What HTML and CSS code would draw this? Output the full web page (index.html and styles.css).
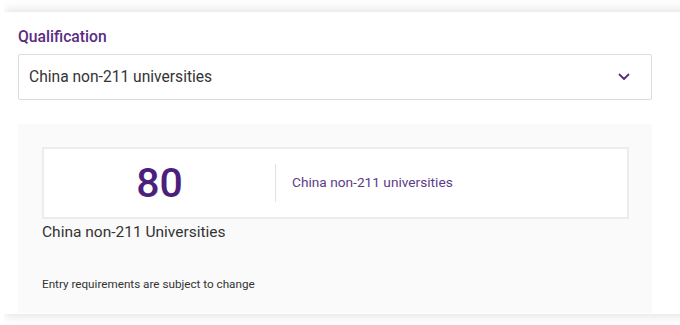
FILE: index.html
```html
<!DOCTYPE html>
<html lang="en">
<head>
    <meta charset="UTF-8">
    <meta name="viewport" content="width=device-width, initial-scale=1.0">
    <title>Entry requirements</title>
    <link rel="stylesheet" href="styles.css">
</head>
<body>
    <div class="card">
        <label class="field-label" for="qualification">Qualification</label>
        <div class="select">
            <span class="select-value" id="qualification">China non-211 universities</span>
            <svg class="chevron" viewBox="0 0 12 8" fill="none">
                <path d="M1.5 1.5l4.5 4.5 4.5-4.5" stroke="currentColor" stroke-width="1.8" stroke-linecap="round" stroke-linejoin="round"/>
            </svg>
        </div>

        <div class="panel">
            <div class="score-box">
                <div class="score">80</div>
                <div class="score-label">China non-211 universities</div>
            </div>
            <div class="score-title">China non-211 Universities</div>
            <p class="note">Entry requirements are subject to change</p>
        </div>
    </div>
</body>
</html>
```

FILE: styles.css
```css
* {
    margin: 0;
    padding: 0;
    box-sizing: border-box;
}

body {
    font-family: Roboto, 'Liberation Sans', sans-serif;
    background: #fff;
    color: #333;
    overflow: hidden;
    height: 325px;
}

.card {
    margin: 12px -20px 0 4px;
    height: 302px;
    padding: 16px 48px 0 14px;
    background: #fff;
    box-shadow: 0 -4px 9px rgba(0, 0, 0, 0.08), 0 4px 9px rgba(0, 0, 0, 0.08);
    clip-path: inset(-14px -40px -14px 0);
}

.field-label {
    display: block;
    font-size: 15.7px;
    font-weight: 500;
    line-height: 18px;
    color: #5a2d82;
    margin-bottom: 8px;
}

.select {
    display: flex;
    align-items: center;
    justify-content: space-between;
    width: 634px;
    height: 46px;
    padding: 0 21px 0 10px;
    border: 1px solid #dcdcdc;
    border-radius: 2px;
    background: #fff;
}

.select-value {
    font-size: 15.6px;
    color: #333;
}

.chevron {
    width: 12px;
    height: 8px;
    color: #5a2d82;
}

.panel {
    width: 634px;
    height: 189px;
    margin-top: 24px;
    padding: 23px 23px 0 24px;
    background: #fafafa;
}

.score-box {
    display: flex;
    align-items: center;
    height: 72px;
    background: #fff;
    border: 2px solid #ececec;
}

.score {
    width: 232px;
    text-align: center;
    font-size: 41px;
    font-weight: 500;
    color: #4b1f7e;
    border-right: 1px solid #e2e2e2;
    line-height: 38px;
}

.score-label {
    padding-left: 16px;
    margin-top: -3px;
    font-size: 13.7px;
    color: #5c3a89;
}

.score-title {
    margin-top: 3px;
    font-size: 15.5px;
    line-height: 20px;
    color: #333;
}

.note {
    margin-top: 35px;
    font-size: 11.7px;
    color: #333;
}
```
